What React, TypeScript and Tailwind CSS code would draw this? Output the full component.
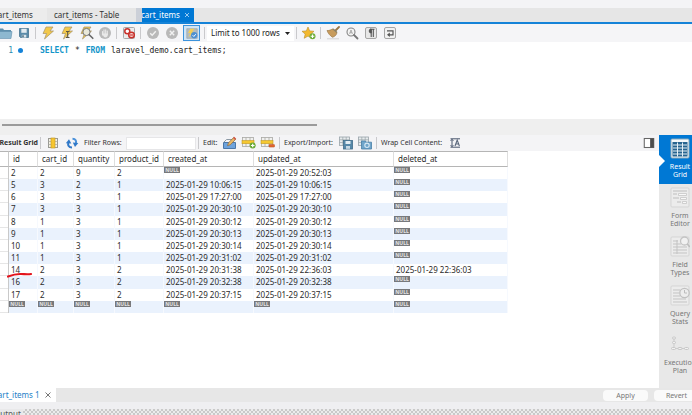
import React, { useState } from 'react';

type Cell = string | null;

const COLUMNS = [
  { name: 'id', width: 'w-[29px]' },
  { name: 'cart_id', width: 'w-[36px]' },
  { name: 'quantity', width: 'w-[41px]' },
  { name: 'product_id', width: 'w-[49px]' },
  { name: 'created_at', width: 'w-[90px]' },
  { name: 'updated_at', width: 'w-[140px]' },
  { name: 'deleted_at', width: 'w-[114px]' },
];

const ROWS: Cell[][] = [
  ['2', '2', '9', '2', null, '2025-01-29 20:52:03', null],
  ['5', '3', '2', '1', '2025-01-29 10:06:15', '2025-01-29 10:06:15', null],
  ['6', '3', '3', '1', '2025-01-29 17:27:00', '2025-01-29 17:27:00', null],
  ['7', '3', '3', '1', '2025-01-29 20:30:10', '2025-01-29 20:30:10', null],
  ['8', '1', '3', '1', '2025-01-29 20:30:12', '2025-01-29 20:30:12', null],
  ['9', '1', '3', '1', '2025-01-29 20:30:13', '2025-01-29 20:30:13', null],
  ['10', '1', '3', '1', '2025-01-29 20:30:14', '2025-01-29 20:30:14', null],
  ['11', '1', '3', '1', '2025-01-29 20:31:02', '2025-01-29 20:31:02', null],
  ['14', '2', '3', '2', '2025-01-29 20:31:38', '2025-01-29 22:36:03', '2025-01-29 22:36:03'],
  ['16', '2', '3', '2', '2025-01-29 20:32:38', '2025-01-29 20:32:38', null],
  ['17', '2', '3', '2', '2025-01-29 20:37:15', '2025-01-29 20:37:15', null],
  [null, null, null, null, null, null, null],
];

const Svg: React.FC<{ children: React.ReactNode; className?: string }> = ({ children, className = 'w-4 h-[14px]' }) => (
  <svg viewBox="0 0 16 14" className={`shrink-0 ${className}`} fill="none" aria-hidden="true">
    {children}
  </svg>
);

const Bolt = () => (
  <path d="M6 1h7l-3 4h3.5L4.5 13l2-5.5H3z" fill="#f2c84b" stroke="#a3906a" strokeWidth=".7" />
);

const FolderIcon = () => (
  <Svg>
    <path d="M1 2.5h5l1 1.5h7v8H1z" fill="#5f8fac" />
    <path d="M2 5.5h13l-1 7H1z" fill="#8db8d0" stroke="#5f8fac" strokeWidth=".6" />
  </Svg>
);

const SaveIcon = () => (
  <Svg>
    <path d="M3.5 2.5h9v9h-8l-1-1z" fill="#5b8ba9" stroke="#47738f" strokeWidth=".8" />
    <path d="M5.3 2.8h5.4v4H5.3z" fill="#e3ebf0" />
    <path d="M5.8 8.8h4.5v2.8H5.8z" fill="#dbe4ea" />
    <path d="M6.3 9.3h1.4v2H6.3z" fill="#3e6379" />
  </Svg>
);

const ExecuteIcon = () => <Svg><Bolt /></Svg>;

const ExecuteCursorIcon = () => (
  <Svg>
    <Bolt />
    <path d="M7 5.5h3.5M8.7 5.5v6M7 11.5h3.5" stroke="#5c5540" strokeWidth="1.1" />
  </Svg>
);

const ExplainIcon = () => (
  <Svg>
    <Bolt />
    <circle cx="8.5" cy="6" r="3.6" fill="#e7edf1" fillOpacity=".85" stroke="#777" />
    <path d="M11.2 8.7l3.6 3.6" stroke="#666" strokeWidth="1.6" strokeLinecap="round" />
  </Svg>
);

const StopIcon = () => (
  <Svg>
    <circle cx="8" cy="7" r="6" fill="#b9b9b9" />
    <path d="M5.5 9V5.5M7 8V3.7M8.7 8V3.7M10.3 8.5V5" stroke="#e9e9e9" strokeLinecap="round" strokeWidth="1.1" />
    <path d="M5 7.5h5.8v1.8a2.3 2.3 0 0 1-4 1.4z" fill="#e9e9e9" />
  </Svg>
);

const StopOnErrorIcon = () => (
  <Svg>
    <rect x="2.5" y="1.5" width="11" height="11" rx="1" fill="#ececec" stroke="#a9a9a9" />
    <circle cx="6.3" cy="5.2" r="2.5" fill="#fff" stroke="#c8302a" strokeWidth="1.5" />
    <circle cx="10.5" cy="9" r="2.8" fill="#f5d6d4" stroke="#c8302a" strokeWidth="1.5" />
    <path d="M8.8 9h3.4" stroke="#c8302a" strokeWidth="1.1" />
  </Svg>
);

const CommitIcon = () => (
  <Svg>
    <circle cx="8" cy="7" r="6" fill="#b9b9b9" />
    <path d="M5.2 7.2l2 2 3.6-4" stroke="#f1f1f1" strokeWidth="1.4" />
  </Svg>
);

const RollbackIcon = () => (
  <Svg>
    <circle cx="8" cy="7" r="6" fill="#b9b9b9" />
    <path d="M5.8 4.8l4.4 4.4M10.2 4.8L5.8 9.2" stroke="#f1f1f1" strokeWidth="1.4" />
  </Svg>
);

const AutoCommitIcon = () => (
  <Svg className="w-[14px] h-[13px]">
    <path d="M2 1.5h12v11H2z" fill="#b3bcc0" stroke="#8b979d" strokeWidth=".6" />
    <path d="M6 1.5h5L8 5h3l-7 6 2-4.5H3.5z" fill="#f4cf57" />
    <circle cx="10.5" cy="9" r="3.6" fill="#4c90d2" />
    <path d="M8.8 9l1.3 1.4 2.2-2.6" stroke="#fff" strokeWidth="1.1" />
  </Svg>
);

const SnippetIcon = () => (
  <Svg>
    <path d="M7 1l1.7 3.9 4.3.4-3.2 2.8 1 4.2L7 10.1l-3.8 2.2 1-4.2L1 5.3l4.3-.4z" fill="#f3b92f" stroke="#b98b27" strokeWidth=".6" />
    <circle cx="11.5" cy="10.3" r="3" fill="#6fae3c" />
    <path d="M11.5 8.5v3.6M9.7 10.3h3.6" stroke="#fff" strokeWidth="1.1" />
  </Svg>
);

const BeautifyIcon = () => (
  <Svg>
    <path d="M10.5 4.5L14 1" stroke="#9b7645" strokeWidth="1.8" strokeLinecap="round" />
    <path d="M2 4.5c2 .3 4-.8 6-1.7l4 3.7c-.3 2.3-2 4-4.5 4.8C5 9.500 3 7.500 2 4.500z" fill="#c89c5d" stroke="#94713f" strokeWidth=".6" />
    <path d="M8 3l4 3.5" stroke="#8d8468" strokeWidth="1.2" />
    <path d="M2 12.8h12" stroke="#d3d3d3" />
  </Svg>
);

const FindIcon = () => (
  <Svg>
    <circle cx="7" cy="6" r="4" fill="#f4f4f4" stroke="#858585" strokeWidth="1.1" />
    <path d="M5.5 7.8L7 4l1.5 3.8M6 6.8h2" stroke="#909090" strokeWidth=".7" />
    <path d="M10 9l3.5 3.5" stroke="#777" strokeWidth="1.8" strokeLinecap="round" />
  </Svg>
);

const InvisiblesIcon = () => (
  <Svg>
    <rect x="2.5" y="1.5" width="11" height="11" rx="1.5" fill="#e7e7e7" stroke="#a5a5a5" />
    <path d="M8.2 3v8M10.3 3v8M7 3.3h4.5" stroke="#555" strokeWidth="1.1" />
    <path d="M8.2 3a2 2 0 0 0 0 4z" fill="#555" stroke="#555" />
  </Svg>
);

const WrapIcon = () => (
  <Svg>
    <rect x="2.5" y="1.5" width="11" height="11" rx="1.5" fill="#f1f1f1" stroke="#a5a5a5" />
    <path d="M5 4.8h6v4H6.5" stroke="#555" strokeWidth="1.2" />
    <path d="M7.8 6.6v4.4L5 8.8z" fill="#555" />
  </Svg>
);

const GridColumnsIcon = () => (
  <Svg>
    <rect x="3.5" y="2.5" width="9" height="9" fill="#f4f1e4" stroke="#9a9a94" />
    <path d="M3.5 5.5h9M3.5 8.5h9" stroke="#a9a9a4" strokeWidth=".8" />
    <rect x="6" y="2" width="4" height="10" fill="#f7c62e" stroke="#c69c2b" strokeWidth=".7" />
  </Svg>
);

const RefreshIcon = () => (
  <Svg>
    <path d="M8 11.5C4.5 11.5 3.8 9 4.3 6.5" stroke="#3179c8" strokeWidth="2" />
    <path d="M1.8 7.2L5 3.3l2.3 4.3z" fill="#3179c8" />
    <path d="M8.5 2.8c3.3 0 4 2.3 3.4 4.7" stroke="#4a91d9" strokeWidth="2" />
    <path d="M14.3 6.9L11 10.9 8.8 6.5z" fill="#3179c8" />
  </Svg>
);

const EditRowIcon = () => (
  <Svg>
    <path d="M1.5 6.5h12v6h-12z" fill="#6ea3dc" stroke="#4c78a8" />
    <path d="M1.5 6.5l3-3h7" stroke="#8d9aa5" />
    <path d="M5.5 9.7l1-2.9 5.3-5.5 2 1.9L8.4 8.7z" fill="#e9b967" stroke="#8a6840" strokeWidth=".7" />
    <path d="M11 2l1.2-1.2 2 1.9L13 4z" fill="#d25a4b" />
  </Svg>
);

// shared by the insert and delete row buttons
const RowGrid = () => (
  <>
    <rect x="1.5" y="1.5" width="11" height="9" fill="#f1f1ef" stroke="#a9a9a3" strokeWidth=".8" />
    <path d="M5 1.5v9M9 1.5v9" stroke="#a9a9a3" strokeWidth=".8" />
    <rect x="1" y="4.5" width="12" height="3.2" fill="#f5c831" stroke="#c49c2b" strokeWidth=".6" />
  </>
);

const InsertRowIcon = () => (
  <Svg>
    <RowGrid />
    <circle cx="11.7" cy="9.5" r="3" fill="#68a936" />
    <path d="M11.7 7.7v3.6M9.9 9.5h3.6" stroke="#fff" strokeWidth="1.2" />
  </Svg>
);

const DeleteRowIcon = () => (
  <Svg>
    <RowGrid />
    <rect x="9" y="8.5" width="5.5" height="2.6" rx=".5" fill="#e0662d" stroke="#b94c20" strokeWidth=".5" />
  </Svg>
);

const TableBack = () => (
  <>
    <rect x="1.5" y="1" width="10" height="8.5" fill="#e7ebed" stroke="#98a3a9" strokeWidth=".8" />
    <path d="M1.5 3.8h10M1.5 6.5h10M4.8 1v8.5M8.2 1v8.5" stroke="#98a3a9" strokeWidth=".7" />
  </>
);

const ExportIcon = () => (
  <Svg>
    <TableBack />
    <rect x="5.5" y="4.5" width="9" height="8.5" fill="#5688a8" stroke="#406d8a" strokeWidth=".8" />
    <path d="M7.5 5h5v3h-5z" fill="#e3edf3" />
    <path d="M8 10h4v2.8H8z" fill="#c8d9e4" />
  </Svg>
);

const ImportIcon = () => (
  <Svg>
    <TableBack />
    <path d="M4.5 5h3.8l1 1.2h5.2V13h-10z" fill="#70a5ca" stroke="#487fa7" strokeWidth=".8" />
    <circle cx="10" cy="9.3" r="2.2" stroke="#d6e8f4" strokeWidth="1.1" />
  </Svg>
);

const WrapCellIcon = () => (
  <Svg>
    <path d="M3.5 2.8h9.5M3.5 11.2H13M5 3.5v7" stroke="#49566d" />
    <path d="M3.5 5L5 3.2 6.5 5M3.5 9L5 10.8 6.5 9" stroke="#49566d" strokeWidth=".8" />
    <path d="M8 10l2.2-6 2.2 6M8.7 8h3" stroke="#59667b" strokeWidth="1.1" />
  </Svg>
);

const PanelIcon = () => (
  <Svg className="w-3 h-[12px]">
    <rect x="1.7" y="1" width="12.6" height="12" fill="#fff" stroke="#666" strokeWidth="1.4" />
    <path d="M9.5 1h5v12h-5z" fill="#4d4d4d" />
  </Svg>
);

const Sep = () => (
  <span className="flex w-[5px] shrink-0 justify-center">
    <span className="h-3 w-px bg-[#c9c9cc]" />
  </span>
);

const ToolButton: React.FC<{ label: string; children: React.ReactNode; className?: string }> = ({ label, children, className = '' }) => (
  <button aria-label={label} className={`flex w-[19px] shrink-0 items-center justify-center ${className}`}>
    {children}
  </button>
);

const Null = () => (
  <span className="block h-[6px] w-4 bg-[#77797c] text-center text-[5px] font-bold leading-[6px] text-[#e6e6e6]">NULL</span>
);

const SideIcon: React.FC<{ kind: string }> = ({ kind }) => (
  <svg viewBox="0 0 20 21" className="h-[21px] w-5" fill="none" aria-hidden="true">
    {kind === 'grid' && (
      <>
        <rect x="1" y="1" width="18" height="19" rx="1" fill="#f4f8fa" stroke="#86a7b9" />
        <rect x="2.5" y="4" width="15" height="14.5" fill="#27648f" />
        <path d="M3 7h14M3 10h14M3 13h14M3 16h14M7.5 4.5v14M12.5 4.5v14" stroke="#e5f0f6" />
      </>
    )}
    {(kind === 'form' || kind === 'field' || kind === 'stats') && (
      <rect x="1" y="1" width="18" height="19" rx="1" fill="#ececec" stroke="#d5d5d5" />
    )}
    {kind === 'form' && (
      <>
        <path d="M3 4h14M3 7h4M3 11h6M7 15h4" stroke="#bdbdbd" strokeWidth="1.2" />
        <path d="M8.5 6.5h8v2h-8zM10.5 10.5h6v2h-6zM12.5 14.5h4v2h-4z" fill="#f8f8f8" stroke="#c5c5c5" strokeWidth=".8" />
      </>
    )}
    {kind === 'field' && (
      <>
        <path d="M3 5h5M3 8h8M3 11h14M3 14h14M3 17h14M7 4v14" stroke="#c3c3c3" />
        <circle cx="14.5" cy="5" r="4" fill="#f1f1f1" stroke="#c4c4c4" strokeWidth="1.3" />
        <path d="M17.3 8l2.5 3" stroke="#bdbdbd" strokeWidth="1.5" />
      </>
    )}
    {kind === 'stats' && (
      <>
        <path d="M3 5h7M3 8h6M3 11h7M3 14h13M3 17h14" stroke="#c3c3c3" />
        <circle cx="14.5" cy="8" r="4.7" fill="#ededed" stroke="#c0c0c0" strokeWidth="1.3" />
        <path d="M14.5 5v3h2.5" stroke="#bcbcbc" />
      </>
    )}
    {kind === 'plan' && (
      <>
        <path d="M4 4v10M4 14.5h13" stroke="#cbcbcb" />
        <g fill="#f1f1f1" stroke="#c8c8c8">
          <rect x="2.5" y="3" width="3" height="2" rx="1" />
          <rect x="2.5" y="7.5" width="3" height="2" rx="1" />
          <rect x="1.5" y="13.5" width="4" height="2" rx="1" />
          <rect x="8" y="13.5" width="4" height="2" rx="1" />
          <rect x="14.5" y="13.5" width="4" height="2" rx="1" />
        </g>
      </>
    )}
  </svg>
);

const VIEWS = [
  { kind: 'grid', lines: ['Result', 'Grid'] },
  { kind: 'form', lines: ['Form', 'Editor'] },
  { kind: 'field', lines: ['Field', 'Types'] },
  { kind: 'stats', lines: ['Query', 'Stats'] },
  { kind: 'plan', lines: ['Execution', 'Plan'] },
];

const EditorTabs = () => (
  <nav className="flex h-[24px] shrink-0 flex-col border-b-2 border-[#1583d8] bg-[#e6e6e6] text-[8px] leading-[14px] text-[#333]">
    <div className="h-2 bg-[#f4f4f6]" />
    <div className="flex h-[14px]">
      <button className="flex w-[47px] shrink-0 bg-[#ececec]">
        <span className="-ml-[6px]">cart_items</span>
      </button>
      <button className="w-[89px] shrink-0 pl-[7px] text-left">cart_items - Table</button>
      <span className="w-[6px] shrink-0 bg-[#ccd0d8]" />
      <div className="flex w-[52px] shrink-0 items-center justify-between overflow-hidden bg-[#0078d4] pr-1 text-white">
        <button className="-ml-px">cart_items</button>
        <button aria-label="Close tab">
          <svg viewBox="0 0 6 6" className="size-[6px]" aria-hidden="true">
            <path d="M1 1l4 4M5 1L1 5" stroke="#a9d4f5" strokeWidth=".9" />
          </svg>
        </button>
      </div>
    </div>
  </nav>
);

const EditorToolbar = () => (
  <div className="flex h-[18px] shrink-0 items-center bg-[#f5f5f7]">
    <ToolButton label="Open script" className="-ml-[5px]"><FolderIcon /></ToolButton>
    <ToolButton label="Save script"><SaveIcon /></ToolButton>
    <Sep />
    <ToolButton label="Execute"><ExecuteIcon /></ToolButton>
    <ToolButton label="Execute current statement"><ExecuteCursorIcon /></ToolButton>
    <ToolButton label="Explain"><ExplainIcon /></ToolButton>
    <ToolButton label="Stop"><StopIcon /></ToolButton>
    <Sep />
    <ToolButton label="Stop on error"><StopOnErrorIcon /></ToolButton>
    <Sep />
    <ToolButton label="Commit"><CommitIcon /></ToolButton>
    <ToolButton label="Rollback"><RollbackIcon /></ToolButton>
    <button aria-label="Toggle autocommit" className="mx-[2px] flex h-4 w-[17px] shrink-0 items-center justify-center border border-[#3b93dc] bg-[#cfe4f5]">
      <AutoCommitIcon />
    </button>
    <Sep />
    <div className="relative flex h-[15px] w-[87px] shrink-0 items-center bg-white">
      <select aria-label="Row limit" className="h-full w-full appearance-none pl-[4px] text-[8px] text-[#222] outline-none">
        <option>Limit to 1000 rows</option>
        <option>Don't Limit</option>
      </select>
      <svg viewBox="0 0 5 3" className="pointer-events-none absolute right-[4px] h-[3px] w-[5px]" aria-hidden="true">
        <path d="M0 0h5L2.5 3z" fill="#222" />
      </svg>
    </div>
    <Sep />
    <ToolButton label="Save snippet"><SnippetIcon /></ToolButton>
    <Sep />
    <ToolButton label="Beautify"><BeautifyIcon /></ToolButton>
    <ToolButton label="Find"><FindIcon /></ToolButton>
    <ToolButton label="Show invisible characters"><InvisiblesIcon /></ToolButton>
    <ToolButton label="Wrap lines"><WrapIcon /></ToolButton>
  </div>
);

const ResultToolbar = () => {
  const [filter, setFilter] = useState('');

  return (
    <div className="flex h-4 shrink-0 items-center overflow-hidden whitespace-nowrap bg-[#f4f4f6] text-[7px] text-[#333]">
      <h2 className="flex w-[38px] shrink-0 justify-end font-bold">Result Grid</h2>
      <Sep />
      <ToolButton label="Field widths"><GridColumnsIcon /></ToolButton>
      <ToolButton label="Refresh"><RefreshIcon /></ToolButton>
      <label htmlFor="filter" className="ml-[3px] w-[42px] shrink-0">Filter Rows:</label>
      <input
        id="filter"
        type="text"
        value={filter}
        onChange={(e) => setFilter(e.target.value)}
        className="h-[13px] w-[70px] shrink-0 border border-[#e6e6e8] bg-white px-1 outline-none"
      />
      <Sep />
      <span className="ml-[2px] w-[17px] shrink-0">Edit:</span>
      <ToolButton label="Edit row"><EditRowIcon /></ToolButton>
      <ToolButton label="Insert row"><InsertRowIcon /></ToolButton>
      <ToolButton label="Delete row"><DeleteRowIcon /></ToolButton>
      <Sep />
      <span className="ml-[2px] w-[52px] shrink-0">Export/Import:</span>
      <ToolButton label="Export"><ExportIcon /></ToolButton>
      <ToolButton label="Import"><ImportIcon /></ToolButton>
      <Sep />
      <span className="ml-[2px] w-[64px] shrink-0">Wrap Cell Content:</span>
      <ToolButton label="Wrap cell content"><WrapCellIcon /></ToolButton>
      <button aria-label="Toggle side panel" className="ml-auto mr-1"><PanelIcon /></button>
    </div>
  );
};

const ResultTable = () => (
  <div className="relative self-start">
    <table className="h-[162px] w-[508px] table-fixed border-separate border-spacing-0 whitespace-nowrap text-[8px] leading-[12px] text-[#2b2b2b]">
      <thead>
        <tr className="h-4">
          <th className="h-4 w-[9px] border-y border-r border-y-[#b5b5b5] border-r-[#c9c9c9] p-0" aria-label="Row" />
          {COLUMNS.map((c) => (
            <th key={c.name} className={`${c.width} h-4 border-y border-r border-y-[#b5b5b5] border-r-[#dedede] p-0 pl-[4px] text-left font-normal`}>
              {c.name}
            </th>
          ))}
        </tr>
      </thead>
      <tbody>
        {ROWS.map((row, i) => (
          <tr key={i} className={`h-[12px] ${i % 2 ? 'bg-[#eaf2fd]' : 'bg-white'}`}>
            <td className="border-r border-[#c9c9c9] bg-white p-0 shadow-[inset_0_-1px_#e6e6e6]" />
            {row.map((cell, j) => (
              <td key={j} className={`border-r border-[#f6f9fe] p-0 align-top ${cell === null ? '' : 'pl-[2px]'}`}>
                {cell === null ? <Null /> : <span className="block h-[12px]">{cell}</span>}
              </td>
            ))}
          </tr>
        ))}
      </tbody>
    </table>
    {/* red pen mark under row 14 */}
    <svg viewBox="0 0 26 6" className="absolute left-[7px] top-[121px] h-[6px] w-[26px]" fill="none" aria-hidden="true">
      <path d="M1 4.5C5 3 9 1.8 14 2s7 .5 10 0" stroke="#e3141c" strokeWidth="2.2" strokeLinecap="round" />
    </svg>
  </div>
);

const ViewSidebar = () => {
  const [view, setView] = useState('grid');

  return (
    <aside className="w-[33px] shrink-0 overflow-hidden bg-[#e8e8e8]">
      {VIEWS.map((v) => (
        <button
          key={v.kind}
          onClick={() => setView(v.kind)}
          className={`relative flex h-[49px] w-[42px] flex-col items-center pt-[3px] text-[7px] leading-[8px] ${view === v.kind ? 'bg-[#0078d4] text-white' : 'text-[#777]'}`}
        >
          {view === v.kind && (
            <svg viewBox="0 0 6 12" className="absolute left-0 top-5 h-3 w-[6px]" aria-hidden="true">
              <path d="M0 0l6 6-6 6z" fill="#fff" />
            </svg>
          )}
          <SideIcon kind={v.kind} />
          <span className="mt-[4px]">
            {v.lines[0]}
            <br />
            {v.lines[1]}
          </span>
        </button>
      ))}
    </aside>
  );
};

const App: React.FC = () => {
  return (
    <div className="flex h-screen flex-col overflow-hidden bg-white font-['Noto_Sans',sans-serif]">
      <EditorTabs />
      <EditorToolbar />

      <div className="flex h-[77px] shrink-0 pt-[3px] font-['DejaVu_Sans_Mono',monospace] text-[8px] leading-[12px]">
        <span className="w-[13px] text-right text-[#2d8aae]">1</span>
        <span className="ml-[5px] mt-[3px] size-[5px] rounded-full bg-[#1583d8]" />
        <code className="ml-[17px] flex gap-[6px] font-['DejaVu_Sans_Mono',monospace] text-[#222]">
          <span className="font-bold text-[#1495c9]">SELECT</span>
          <span>*</span>
          <span className="font-bold text-[#1495c9]">FROM</span>
          <span>laravel_demo.cart_items;</span>
        </code>
      </div>

      <div className="h-4 shrink-0 bg-[#efefef] pl-[2px] pt-[5px]">
        <div className="h-[2px] w-[315px] bg-[#9b9b9b]" />
      </div>

      <main className="flex min-h-0 flex-1">
        <section className="flex min-w-0 flex-1 flex-col">
          <ResultToolbar />
          <ResultTable />
        </section>
        <ViewSidebar />
      </main>

      <footer className="shrink-0 text-[8px]">
        <div className="flex h-[14px] items-center bg-[#e7e7e7]">
          <div className="flex h-full w-[56px] items-center justify-between bg-white pr-[5px] leading-[14px] text-[#2580c8]">
            <button className="-ml-[6px] whitespace-nowrap">cart_items 1</button>
            <button aria-label="Close result">
              <svg viewBox="0 0 6 6" className="size-[6px]" aria-hidden="true">
                <path d="M.5.5l5 5M5.5.5l-5 5" stroke="#777" />
              </svg>
            </button>
          </div>
          <div className="ml-auto flex gap-[6px] text-[7px] leading-[11px] text-[#777]">
            <button className="w-[45px] rounded-sm bg-[#fafafa]">Apply</button>
            <button className="-mr-[7px] w-[45px] rounded-sm bg-[#fafafa]">Revert</button>
          </div>
        </div>
        <div className="h-[7px] bg-[#efeff1]" />
        <div className="flex h-[6px] overflow-hidden bg-[#e9e9ea]">
          <h2 className="-ml-[6px] bg-[#e9e9ea] pr-[2px] text-[8px] leading-[9px] text-[#555]">Output</h2>
          <div className="flex-1 bg-[repeating-conic-gradient(#c9c9c9_0_25%,#ececec_0_50%)] bg-[length:4px_4px]" />
        </div>
      </footer>
    </div>
  );
};

export default App;
